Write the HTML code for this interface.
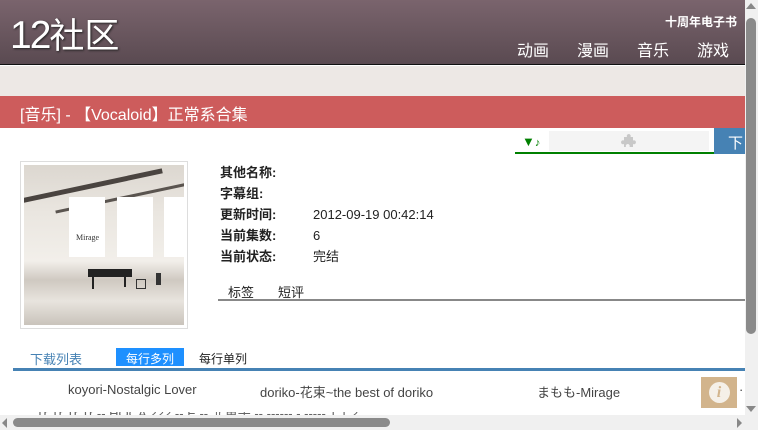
<!DOCTYPE html>
<html><head><meta charset="utf-8"><style>
*{margin:0;padding:0;box-sizing:border-box}
body{width:758px;height:430px;overflow:hidden;background:#fff;font-family:"Liberation Sans","Noto Sans CJK SC",sans-serif;position:relative;font-size:13px;color:#222}
.a{position:absolute;white-space:nowrap}
</style></head><body>
<div class="a" style="left:0;top:0;width:745px;height:65px;background:linear-gradient(#7a646d,#5a4a51);border-bottom:1px solid #111"></div>
<div class="a" style="left:10px;top:14px;font-size:39px;color:#fff;line-height:44px;text-shadow:1px 1px 2px #222;letter-spacing:-2px">12<span style="font-size:35px;letter-spacing:0">社区</span></div>
<div class="a" style="left:665px;top:13px;font-size:12px;font-weight:bold;color:#fff">十周年电子书</div>
<div class="a" style="left:517px;top:37px;font-size:16px;color:#fff">动画</div>
<div class="a" style="left:577px;top:37px;font-size:16px;color:#fff">漫画</div>
<div class="a" style="left:637px;top:37px;font-size:16px;color:#fff">音乐</div>
<div class="a" style="left:697px;top:37px;font-size:16px;color:#fff">游戏</div>
<div class="a" style="left:0;top:66px;width:745px;height:30px;background:#ede8e5"></div>
<div class="a" style="left:0;top:96px;width:745px;height:32px;background:#cd5c5c"></div>
<div class="a" style="left:20px;top:101px;font-size:16px;color:#fff">[音乐] - 【Vocaloid】正常系合集</div>
<div class="a" style="left:522px;top:134px;font-size:13px;color:#008000;font-weight:bold">▼<span style="font-size:11px">♪</span></div>
<div class="a" style="left:549px;top:131px;width:160px;height:20px;background:#f4f4f4"></div>
<svg class="a" style="left:619px;top:132px" width="18" height="18" viewBox="0 0 18 18"><path d="M5 5h3a2 2 0 1 1 3.5 0H14v3.5a2 2 0 1 1 0 3.5V15H10.5a2 2 0 1 0-3.5 0H5v-3a2 2 0 1 1 0-3.5z" fill="#c8c8c8"/></svg>
<div class="a" style="left:515px;top:152px;width:199px;height:2px;background:#008000"></div>
<div class="a" style="left:714px;top:128px;width:31px;height:26px;background:#4682b4;color:#fff;font-size:15px;padding:4px 0 0 14px">下</div>
<div class="a" style="left:20px;top:161px;width:168px;height:168px;border:1px solid #ddd;padding:3px">
<div style="width:160px;height:160px;position:relative;overflow:hidden;background:linear-gradient(#dcd7d0,#eae6e0 30%,#f2efea 60%,#cfc9c1 72%,#e8e4de 85%,#c9c3bb)">
<div class="a" style="left:-20px;top:20px;width:160px;height:5px;background:#4a4440;transform:rotate(-12deg)"></div>
<div class="a" style="left:30px;top:30px;width:150px;height:3px;background:#5a544f;transform:rotate(-12deg)"></div>
<div class="a" style="left:45px;top:32px;width:36px;height:60px;background:#fff"></div>
<div class="a" style="left:93px;top:32px;width:36px;height:60px;background:#fff"></div>
<div class="a" style="left:140px;top:32px;width:20px;height:60px;background:#fff"></div>
<div class="a" style="left:52px;top:68px;font-family:'Liberation Serif',serif;font-size:8px;color:#333">Mirage</div>
<div class="a" style="left:64px;top:104px;width:44px;height:8px;background:#222"></div>
<div class="a" style="left:68px;top:110px;width:2px;height:14px;background:#222"></div>
<div class="a" style="left:100px;top:110px;width:2px;height:12px;background:#222"></div>
<div class="a" style="left:112px;top:114px;width:10px;height:10px;border:1px solid #333"></div>
<div class="a" style="left:132px;top:108px;width:5px;height:12px;background:#333"></div>
</div></div>
<div class="a" style="left:220px;top:162px;font-weight:bold;line-height:21px">其他名称:<br>字幕组:<br>更新时间:<br>当前集数:<br>当前状态:</div>
<div class="a" style="left:313px;top:204px;line-height:21px">2012-09-19 00:42:14<br>6<br>完结</div>
<div class="a" style="left:228px;top:282px">标签</div>
<div class="a" style="left:278px;top:282px">短评</div>
<div class="a" style="left:218px;top:299px;width:527px;height:2px;background:#888"></div>
<div class="a" style="left:30px;top:349px;color:#4682b4">下载列表</div>
<div class="a" style="left:116px;top:348px;width:68px;height:18px;background:#1e90ff;color:#fff;font-size:12px;padding:2px 0 0 10px">每行多列</div>
<div class="a" style="left:199px;top:350px;font-size:12px">每行单列</div>
<div class="a" style="left:13px;top:368px;width:732px;height:3px;background:#4682b4"></div>
<div class="a" style="left:68px;top:382px;color:#444">koyori-Nostalgic Lover</div>
<div class="a" style="left:260px;top:382px;color:#444">doriko-花束~the best of doriko</div>
<div class="a" style="left:537px;top:382px;color:#444">まもも-Mirage</div>
<div class="a" style="left:701px;top:377px;width:36px;height:31px;background:#d2b48c"><div style="margin:5px auto;width:21px;height:21px;border-radius:50%;background:#f5f0e8;color:#d2b48c;font-family:'Liberation Serif',serif;font-style:italic;font-weight:bold;font-size:16px;text-align:center;line-height:21px">i</div></div>
<div class="a" style="left:739px;top:382px;color:#444">·</div>
<div class="a" style="left:0;top:412px;width:745px;height:3px;overflow:hidden"><div style="margin-left:36px;margin-top:-9px;color:#666;font-size:13px;white-space:nowrap">Tr Tr Tr Tr -- HOCA 222 -- E -- 北重子 -- ------ - ----- 1.1.2</div></div>
<div class="a" style="left:745px;top:0;width:13px;height:430px;background:#f0f0f0"></div>
<div class="a" style="left:746px;top:3px;width:0;height:0;border:5px solid transparent;border-bottom:6px solid #888;border-top:0"></div>
<div class="a" style="left:746px;top:18px;width:10px;height:316px;border-radius:5px;background:#8a8a8a"></div>
<div class="a" style="left:746px;top:406px;width:0;height:0;border:5px solid transparent;border-top:6px solid #888;border-bottom:0"></div>
<div class="a" style="left:0;top:415px;width:745px;height:15px;background:#f0f0f0"></div>
<div class="a" style="left:2px;top:418px;width:0;height:0;border:5px solid transparent;border-right:5px solid #888;border-left:0"></div>
<div class="a" style="left:13px;top:418px;width:377px;height:9px;border-radius:5px;background:#8a8a8a"></div>
<div class="a" style="left:737px;top:418px;width:0;height:0;border:5px solid transparent;border-left:5px solid #888;border-right:0"></div>
</body></html>
